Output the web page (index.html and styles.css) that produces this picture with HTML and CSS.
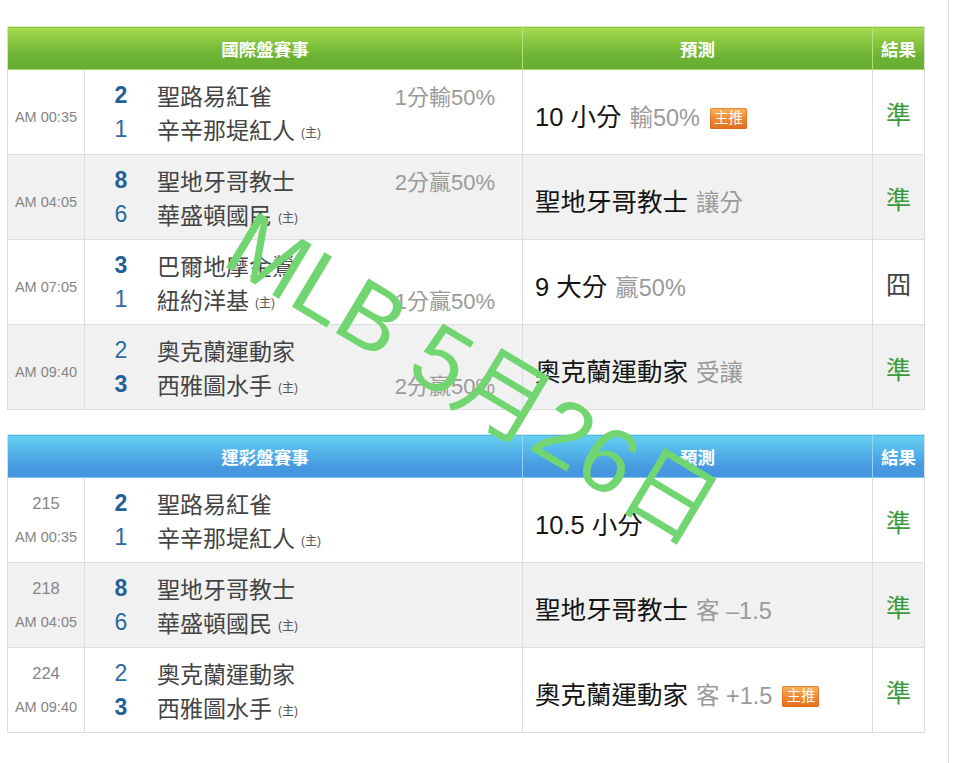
FILE: index.html
```html
<!DOCTYPE html>
<html lang="zh-Hant">
<head>
<meta charset="utf-8">
<title>MLB 5月26日</title>
<link rel="stylesheet" href="styles.css">
</head>
<body>
<div class="page">
  <table class="board green">
    <colgroup><col class="c-time"><col class="c-team"><col class="c-pick"><col class="c-res"></colgroup>
    <thead>
      <tr><th colspan="2">國際盤賽事</th><th>預測</th><th>結果</th></tr>
    </thead>
    <tbody>
      <tr>
        <td class="time"><div class="single">AM 00:35</div></td>
        <td class="teams">
          <div class="line"><span class="score win">2</span><span class="name">聖路易紅雀</span><span class="hcp">1分輸50%</span></div>
          <div class="line"><span class="score">1</span><span class="name">辛辛那堤紅人</span><span class="home">(主)</span></div>
        </td>
        <td class="pick"><div class="pk"><span class="main">10 小分</span><span class="sub">輸50%</span><span class="badge">主推</span></div></td>
        <td class="res ok"><div class="rk">準</div></td>
      </tr>
      <tr class="alt">
        <td class="time"><div class="single">AM 04:05</div></td>
        <td class="teams">
          <div class="line"><span class="score win">8</span><span class="name">聖地牙哥教士</span><span class="hcp">2分贏50%</span></div>
          <div class="line"><span class="score">6</span><span class="name">華盛頓國民</span><span class="home">(主)</span></div>
        </td>
        <td class="pick"><div class="pk"><span class="main">聖地牙哥教士</span><span class="sub">讓分</span></div></td>
        <td class="res ok"><div class="rk">準</div></td>
      </tr>
      <tr>
        <td class="time"><div class="single">AM 07:05</div></td>
        <td class="teams">
          <div class="line"><span class="score win">3</span><span class="name">巴爾地摩金鶯</span></div>
          <div class="line"><span class="score">1</span><span class="name">紐約洋基</span><span class="home">(主)</span><span class="hcp">1分贏50%</span></div>
        </td>
        <td class="pick"><div class="pk"><span class="main">9 大分</span><span class="sub">贏50%</span></div></td>
        <td class="res bad"><div class="rk">囧</div></td>
      </tr>
      <tr class="alt">
        <td class="time"><div class="single">AM 09:40</div></td>
        <td class="teams">
          <div class="line"><span class="score">2</span><span class="name">奧克蘭運動家</span></div>
          <div class="line"><span class="score win">3</span><span class="name">西雅圖水手</span><span class="home">(主)</span><span class="hcp">2分贏50%</span></div>
        </td>
        <td class="pick"><div class="pk"><span class="main">奧克蘭運動家</span><span class="sub">受讓</span></div></td>
        <td class="res ok"><div class="rk">準</div></td>
      </tr>
    </tbody>
  </table>

  <table class="board blue">
    <colgroup><col class="c-time"><col class="c-team"><col class="c-pick"><col class="c-res"></colgroup>
    <thead>
      <tr><th colspan="2">運彩盤賽事</th><th>預測</th><th>結果</th></tr>
    </thead>
    <tbody>
      <tr>
        <td class="time"><div class="tl num">215</div><div class="tl">AM 00:35</div></td>
        <td class="teams">
          <div class="line"><span class="score win">2</span><span class="name">聖路易紅雀</span></div>
          <div class="line"><span class="score">1</span><span class="name">辛辛那堤紅人</span><span class="home">(主)</span></div>
        </td>
        <td class="pick"><div class="pk"><span class="main">10.5 小分</span></div></td>
        <td class="res ok"><div class="rk">準</div></td>
      </tr>
      <tr class="alt">
        <td class="time"><div class="tl num">218</div><div class="tl">AM 04:05</div></td>
        <td class="teams">
          <div class="line"><span class="score win">8</span><span class="name">聖地牙哥教士</span></div>
          <div class="line"><span class="score">6</span><span class="name">華盛頓國民</span><span class="home">(主)</span></div>
        </td>
        <td class="pick"><div class="pk"><span class="main">聖地牙哥教士</span><span class="sub">客 –1.5</span></div></td>
        <td class="res ok"><div class="rk">準</div></td>
      </tr>
      <tr>
        <td class="time"><div class="tl num">224</div><div class="tl">AM 09:40</div></td>
        <td class="teams">
          <div class="line"><span class="score">2</span><span class="name">奧克蘭運動家</span></div>
          <div class="line"><span class="score win">3</span><span class="name">西雅圖水手</span><span class="home">(主)</span></div>
        </td>
        <td class="pick"><div class="pk"><span class="main">奧克蘭運動家</span><span class="sub">客 +1.5</span><span class="badge">主推</span></div></td>
        <td class="res ok"><div class="rk">準</div></td>
      </tr>
    </tbody>
  </table>

  <div class="stamp">MLB 5月26日</div>
</div>
</body>
</html>
```

FILE: styles.css
```css
html, body {
  margin: 0;
  padding: 0;
  background: #ffffff;
}

body {
  font-family: "Liberation Sans", "Noto Sans CJK TC", sans-serif;
  color: #333;
}

.page {
  position: relative;
  box-sizing: border-box;
  width: 949px;
  height: 763px;
  padding: 26px 0 0 7px;
  border-right: 1px solid #dedede;
  overflow: hidden;
}

.board {
  width: 917px;
  border-collapse: collapse;
  table-layout: fixed;
  border: 1px solid #dcdcdc;
}

.board + .board {
  margin-top: 24px;
}

.c-time { width: 77px; }
.c-team { width: 438px; }
.c-pick { width: 350px; }
.c-res { width: 52px; }

.board th {
  height: 42px;
  padding: 0;
  color: #fff;
  font-size: 17.5px;
  font-weight: bold;
  text-align: center;
  vertical-align: middle;
}

.green th {
  background: linear-gradient(#a9dc50 0%, #86c53f 35%, #6cb234 70%, #67ad31 100%);
  border-left: 1px solid #b4e07e;
  border-bottom: 1px solid #a2d46c;
  border-top: 1px solid #d8eec0;
}

.blue th {
  background: linear-gradient(#66d0f1 0%, #52b3e8 40%, #4799e0 75%, #4494df 100%);
  border-left: 1px solid #92d6f3;
  border-bottom: 1px solid #7fc6ef;
  border-top: 1px solid #c6ecf8;
}

.board th:first-child {
  border-left: none;
}

.board td {
  height: 84px;
  padding: 0;
  border: 1px solid #dddddd;
  vertical-align: middle;
}

.board tr.alt td {
  background: #f1f1f1;
}

.time {
  text-align: center;
  color: #858585;
  font-size: 14.5px;
}

.single {
  padding-top: 10px;
}

.tl {
  height: 34px;
  line-height: 34px;
}

.tl.num {
  font-size: 16.5px;
}

.line {
  display: flex;
  align-items: center;
  height: 34px;
}

.score {
  width: 72px;
  text-align: center;
  font-size: 23px;
  color: #2b6aa3;
}

.score.win {
  font-weight: bold;
  color: #23609a;
}

.name {
  font-size: 23px;
  color: #444;
}

.home {
  margin-left: 6px;
  font-size: 12px;
  color: #555;
  padding-top: 4px;
}

.hcp {
  margin-left: auto;
  padding-right: 27px;
  font-size: 22px;
  color: #9a9a9a;
}

.pk {
  padding: 4px 0 0 12px;
  white-space: nowrap;
}

.pick .main {
  font-size: 25.5px;
  color: #151515;
}

.pick .sub {
  margin-left: 8px;
  font-size: 23.5px;
  color: #9a9a9a;
}

.badge {
  display: inline-block;
  vertical-align: 3px;
  margin-left: 10px;
  padding: 0 4px;
  height: 21px;
  line-height: 21px;
  border-radius: 2px;
  background: linear-gradient(#f8b45c 0%, #ef8a35 50%, #e0701d 100%);
  box-shadow: inset 0 0 0 1px rgba(214, 98, 20, 0.55);
  color: #fff;
  font-size: 14.5px;
}

.res {
  text-align: center;
  font-size: 25px;
}

.rk {
  padding-top: 2px;
}

.res.ok {
  color: #3c9a3c;
}

.res.bad {
  color: #444;
}

.stamp {
  position: absolute;
  left: 473px;
  top: 378px;
  transform: translate(-50%, -50%) rotate(31deg);
  font-family: "Liberation Sans", "Noto Sans CJK TC", sans-serif;
  font-size: 92px;
  line-height: 1;
  color: #71d671;
  white-space: nowrap;
  pointer-events: none;
}
```
